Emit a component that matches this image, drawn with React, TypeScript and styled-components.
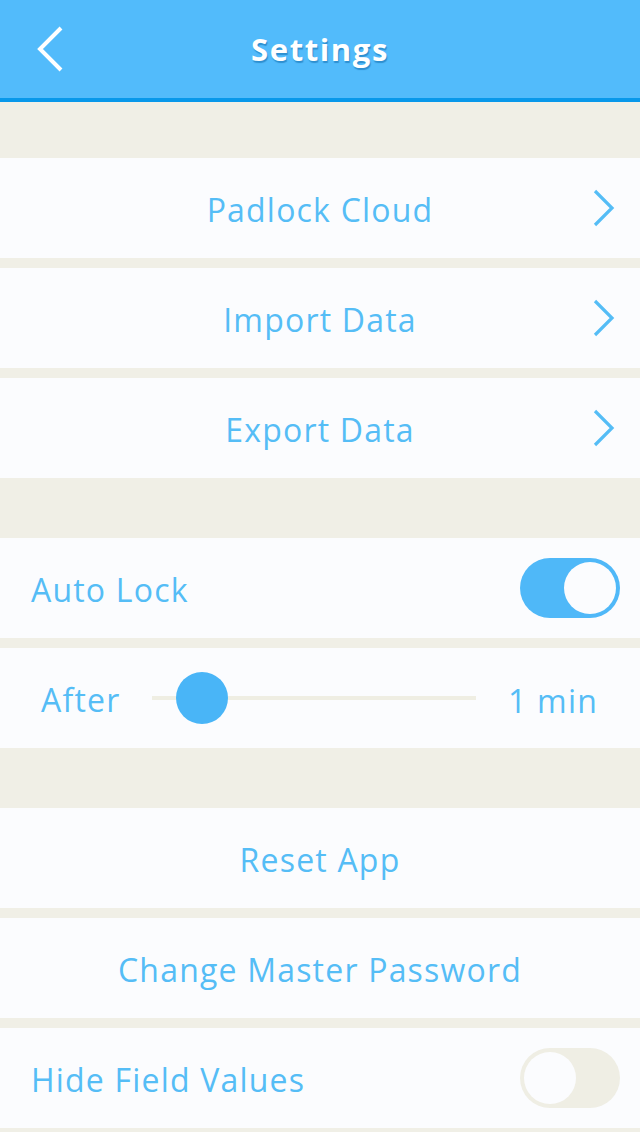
import React from "react";
import styled, { createGlobalStyle } from "styled-components";

const Global = createGlobalStyle`
  html, body { margin: 0; padding: 0; }
  body {
    background: #f0efe6;
    font-family: "Open Sans", "Noto Sans", sans-serif;
    width: 640px;
    height: 1132px;
    overflow: hidden;
  }
`;

const Page = styled.div`
  width: 640px;
  min-height: 1132px;
  background: #f0efe6;
  display: flex;
  flex-direction: column;
`;

const Header = styled.header`
  height: 98px;
  background: #52bbfb;
  border-bottom: 4px solid #0898ea;
  display: grid;
  grid-template-columns: 100px 1fr 100px;
  align-items: center;
`;

const BackButton = styled.div`
  display: flex;
  align-items: center;
  padding-left: 35px;
`;

const Title = styled.h1`
  margin: 0;
  text-align: center;
  color: #fff;
  font-size: 31px;
  font-weight: 700;
  letter-spacing: 1.6px;
  text-shadow: 1px 2px 1px #2e8fd0;
`;

const Section = styled.section<{ $top: number }>`
  margin-top: ${(p) => p.$top}px;
  display: flex;
  flex-direction: column;
  gap: 10px;
`;

const Row = styled.div<{ $center?: boolean }>`
  height: 100px;
  background: #fbfcfe;
  display: flex;
  align-items: center;
  justify-content: ${(p) => (p.$center ? "center" : "space-between")};
  position: relative;
  padding: ${(p) => (p.$center ? "0" : "0 20px 0 31px")};
  box-sizing: border-box;
  color: #55bdf6;
  font-size: 32px;
  letter-spacing: 1.2px;
`;

const Label = styled.span`
  line-height: 1;
  padding-top: 4px;
`;

const Chevron = styled.svg`
  position: absolute;
  right: 24px;
  top: 50%;
  transform: translateY(-50%);
`;

const Toggle = styled.div<{ $on: boolean }>`
  width: 100px;
  height: 60px;
  border-radius: 30px;
  box-sizing: border-box;
  background: ${(p) => (p.$on ? "#4fb8f8" : "#efeee4")};
  display: flex;
  align-items: center;
  justify-content: ${(p) => (p.$on ? "flex-end" : "flex-start")};
  padding: 4px;
`;

const Knob = styled.div`
  width: 52px;
  height: 52px;
  border-radius: 50%;
  background: #fbfcfe;
`;

const SliderRow = styled(Row)`
  padding: 0 42px 0 41px;
  gap: 32px;
`;

const Track = styled.div`
  flex: 1;
  height: 4px;
  background: #efeee3;
  position: relative;
  display: flex;
  align-items: center;
`;

const Thumb = styled.div`
  position: absolute;
  left: 24px;
  width: 52px;
  height: 52px;
  border-radius: 50%;
  background: #49b5f7;
`;

const Value = styled.span`
  padding-top: 4px;
`;

const RightChevron = () => (
  <Chevron width="24" height="40" viewBox="0 0 24 40">
    <path d="M3 3 L20 20 L3 37" fill="none" stroke="#55bdf6" strokeWidth="3.2" />
  </Chevron>
);

export default function App() {
  return (
    <Page>
      <Global />
      <Header>
        <BackButton>
          <svg width="30" height="48" viewBox="0 0 30 48">
            <path d="M26 3 L5 24 L26 45" fill="none" stroke="#fff" strokeWidth="4" />
          </svg>
        </BackButton>
        <Title>Settings</Title>
        <div />
      </Header>
      <Section $top={56}>
        <Row $center>
          <Label>Padlock Cloud</Label>
          <RightChevron />
        </Row>
        <Row $center>
          <Label>Import Data</Label>
          <RightChevron />
        </Row>
        <Row $center>
          <Label>Export Data</Label>
          <RightChevron />
        </Row>
      </Section>
      <Section $top={60}>
        <Row>
          <Label>Auto Lock</Label>
          <Toggle $on>
            <Knob />
          </Toggle>
        </Row>
        <SliderRow>
          <Label>After</Label>
          <Track>
            <Thumb />
          </Track>
          <Value>1 min</Value>
        </SliderRow>
      </Section>
      <Section $top={60}>
        <Row $center>
          <Label>Reset App</Label>
        </Row>
        <Row $center>
          <Label>Change Master Password</Label>
        </Row>
        <Row>
          <Label>Hide Field Values</Label>
          <Toggle $on={false}>
            <Knob />
          </Toggle>
        </Row>
      </Section>
    </Page>
  );
}
